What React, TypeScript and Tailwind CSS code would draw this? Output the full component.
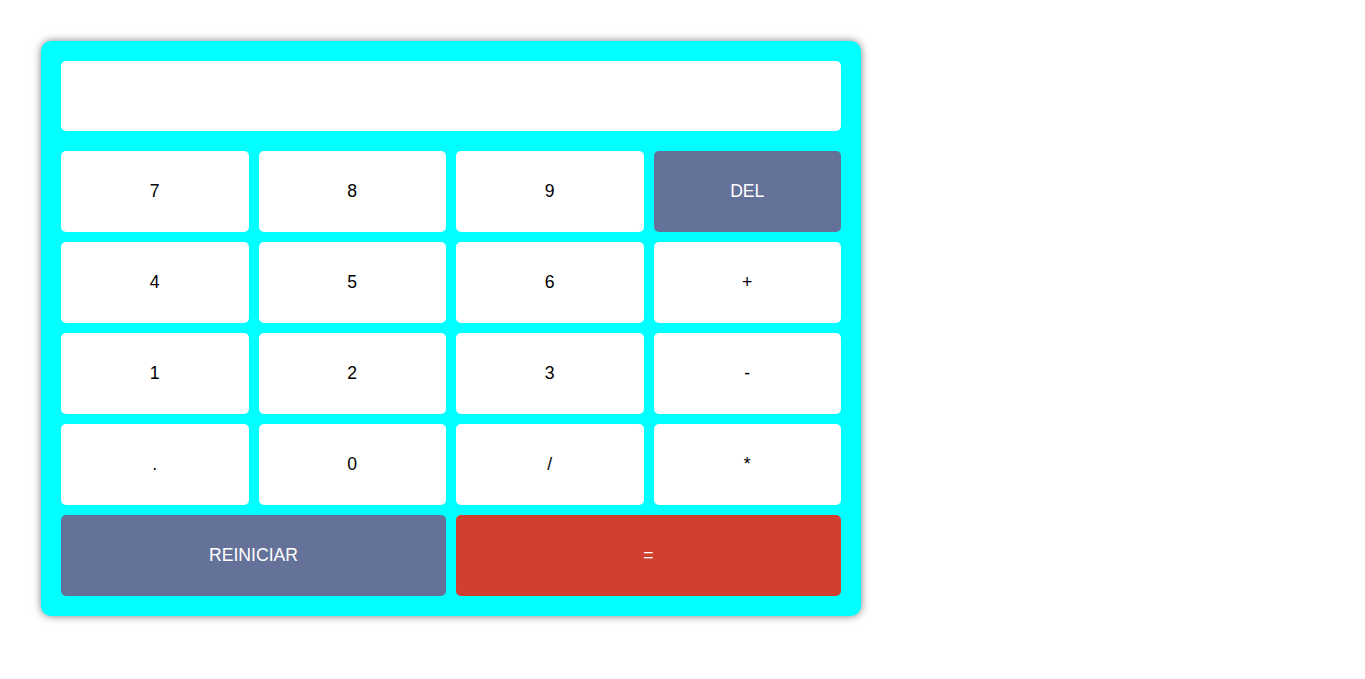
const keys = ["7", "8", "9", "DEL", "4", "5", "6", "+", "1", "2", "3", "-", ".", "0", "/", "*"];

export default function App() {
  return (
    <div className="min-h-screen bg-white pt-[41px] pl-[41px] font-['Liberation_Sans',Arial,sans-serif]">
      <div className="w-[820px] rounded-[10px] bg-[#00ffff] p-5 shadow-[0_0_9px_rgba(0,0,0,0.5)]">
        <div className="h-[70px] rounded-[5px] bg-white" />
        <div className="mt-5 grid grid-cols-4 gap-[10px]">
          {keys.map((k) => (
            <button
              key={k}
              className={
                k === "DEL"
                  ? "h-[81px] rounded-[5px] bg-[#647198] text-[17.6px] text-white"
                  : "h-[81px] rounded-[5px] bg-white text-[17.6px] text-black"
              }
            >
              {k}
            </button>
          ))}
          <button className="col-span-2 h-[81px] rounded-[5px] bg-[#647198] text-[17.6px] text-white">
            REINICIAR
          </button>
          <button className="col-span-2 h-[81px] rounded-[5px] bg-[#d03f2f] text-[17.6px] text-white">
            =
          </button>
        </div>
      </div>
    </div>
  );
}
